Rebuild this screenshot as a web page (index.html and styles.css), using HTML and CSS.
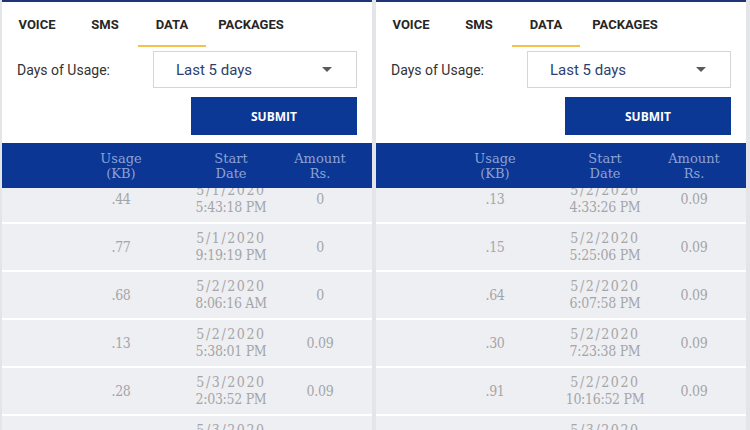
FILE: index.html
```html
<!DOCTYPE html>
<html>
<head>
<meta charset="utf-8">
<link rel="stylesheet" href="styles.css">
</head>
<body>
<div class="screens">
  <section class="panel">
    <nav class="tabs">
      <div class="tab t1">VOICE</div>
      <div class="tab t2">SMS</div>
      <div class="tab t3 active">DATA</div>
      <div class="tab t4">PACKAGES</div>
    </nav>
    <div class="form-row">
      <span class="label">Days of Usage:</span>
      <div class="select"><span class="select-text">Last 5 days</span><span class="caret"></span></div>
    </div>
    <div class="btn-row"><button class="submit">SUBMIT</button></div>
    <div class="table">
      <div class="thead">
        <div class="c-usage">Usage<br>(KB)</div>
        <div class="c-date">Start<br>Date</div>
        <div class="c-amt">Amount<br>Rs.</div>
      </div>
      <div class="tbody">
        <div class="rows">
          <div class="row"><div class="c-usage">.44</div><div class="c-date"><span class="d">5/1/2020</span><br>5:43:18 PM</div><div class="c-amt">0</div></div>
          <div class="row"><div class="c-usage">.77</div><div class="c-date"><span class="d">5/1/2020</span><br>9:19:19 PM</div><div class="c-amt">0</div></div>
          <div class="row"><div class="c-usage">.68</div><div class="c-date"><span class="d">5/2/2020</span><br>8:06:16 AM</div><div class="c-amt">0</div></div>
          <div class="row"><div class="c-usage">.13</div><div class="c-date"><span class="d">5/2/2020</span><br>5:38:01 PM</div><div class="c-amt">0.09</div></div>
          <div class="row"><div class="c-usage">.28</div><div class="c-date"><span class="d">5/3/2020</span><br>2:03:52 PM</div><div class="c-amt">0.09</div></div>
          <div class="row"><div class="c-usage">.19</div><div class="c-date"><span class="d">5/3/2020</span><br>6:41:09 PM</div><div class="c-amt">0.09</div></div>
        </div>
      </div>
    </div>
  </section>
  <section class="panel">
    <nav class="tabs">
      <div class="tab t1">VOICE</div>
      <div class="tab t2">SMS</div>
      <div class="tab t3 active">DATA</div>
      <div class="tab t4">PACKAGES</div>
    </nav>
    <div class="form-row">
      <span class="label">Days of Usage:</span>
      <div class="select"><span class="select-text">Last 5 days</span><span class="caret"></span></div>
    </div>
    <div class="btn-row"><button class="submit">SUBMIT</button></div>
    <div class="table">
      <div class="thead">
        <div class="c-usage">Usage<br>(KB)</div>
        <div class="c-date">Start<br>Date</div>
        <div class="c-amt">Amount<br>Rs.</div>
      </div>
      <div class="tbody">
        <div class="rows">
          <div class="row"><div class="c-usage">.13</div><div class="c-date"><span class="d">5/2/2020</span><br>4:33:26 PM</div><div class="c-amt">0.09</div></div>
          <div class="row"><div class="c-usage">.15</div><div class="c-date"><span class="d">5/2/2020</span><br>5:25:06 PM</div><div class="c-amt">0.09</div></div>
          <div class="row"><div class="c-usage">.64</div><div class="c-date"><span class="d">5/2/2020</span><br>6:07:58 PM</div><div class="c-amt">0.09</div></div>
          <div class="row"><div class="c-usage">.30</div><div class="c-date"><span class="d">5/2/2020</span><br>7:23:38 PM</div><div class="c-amt">0.09</div></div>
          <div class="row"><div class="c-usage">.91</div><div class="c-date"><span class="d">5/2/2020</span><br>10:16:52 PM</div><div class="c-amt">0.09</div></div>
          <div class="row"><div class="c-usage">.22</div><div class="c-date"><span class="d">5/3/2020</span><br>1:12:44 AM</div><div class="c-amt">0.09</div></div>
        </div>
      </div>
    </div>
  </section>
</div>
</body>
</html>
```

FILE: styles.css
```css
html, body {
  margin: 0;
  padding: 0;
  height: 430px;
  overflow: hidden;
  background: #e4e5e8;
}
.screens {
  display: flex;
  gap: 4px;
  padding-left: 2px;
  height: 430px;
}
.panel {
  width: 370px;
  height: 430px;
  overflow: hidden;
  background: #ffffff;
  border-top: 2px solid #1d3577;
  box-sizing: border-box;
  display: flex;
  flex-direction: column;
}
.tabs {
  display: flex;
  font-family: Roboto, "Liberation Sans", sans-serif;
  font-weight: 700;
  font-size: 13px;
  color: #262626;
}
.tab {
  text-align: center;
  line-height: 40px;
  padding-top: 3px;
  border-bottom: 2px solid transparent;
}
.t1 { width: 70px; }
.t2 { width: 66px; }
.t3 { width: 68px; }
.t4 { width: 90px; }
.tab.active { border-bottom-color: #f2c14e; }
.form-row {
  display: flex;
  align-items: center;
  margin-top: 4px;
  padding: 0 15px;
}
.label {
  font-family: Roboto, "Liberation Sans", sans-serif;
  font-size: 14px;
  color: #333333;
  width: 136px;
}
.select {
  width: 204px;
  height: 37px;
  box-sizing: border-box;
  border: 1px solid #d3d5d8;
  display: flex;
  align-items: center;
  justify-content: space-between;
  padding: 0 24px 0 22px;
}
.select-text {
  font-family: Roboto, "Liberation Sans", sans-serif;
  font-size: 15px;
  color: #2d3f6e;
}
.caret {
  width: 0;
  height: 0;
  border-left: 5px solid transparent;
  border-right: 5px solid transparent;
  border-top: 5px solid #5a5a5a;
}
.btn-row {
  display: flex;
  justify-content: flex-end;
  padding: 0 15px;
  margin-top: 9px;
}
.submit {
  width: 166px;
  height: 38px;
  border: 0;
  margin: 0;
  background: #0a3894;
  color: #ffffff;
  font-family: "Open Sans", "Noto Sans", sans-serif;
  font-weight: 700;
  font-size: 12px;
}
.table {
  margin-top: 8px;
  font-family: "DejaVu Serif", serif;
}
.thead, .row {
  display: grid;
  grid-template-columns: 70px 98px 122px 56px 1fr;
  text-align: center;
}
.c-usage { grid-column: 2; }
.c-date { grid-column: 3; }
.c-amt { grid-column: 4; }
.thead {
  position: relative;
  z-index: 1;
  height: 45px;
  align-items: center;
  background: #0b3694;
  color: #8da2d3;
  font-size: 13px;
  line-height: 15px;
}
.tbody {
  overflow: hidden;
}
.rows {
  margin-top: -12px;
  display: flex;
  flex-direction: column;
  gap: 2px;
}
.row {
  height: 46px;
  align-items: center;
  background: #eeeff2;
  color: #a5a5a8;
  font-size: 14px;
  line-height: 17px;
  font-stretch: condensed;
  letter-spacing: -0.3px;
}
.d {
  letter-spacing: 1.6px;
}
```
